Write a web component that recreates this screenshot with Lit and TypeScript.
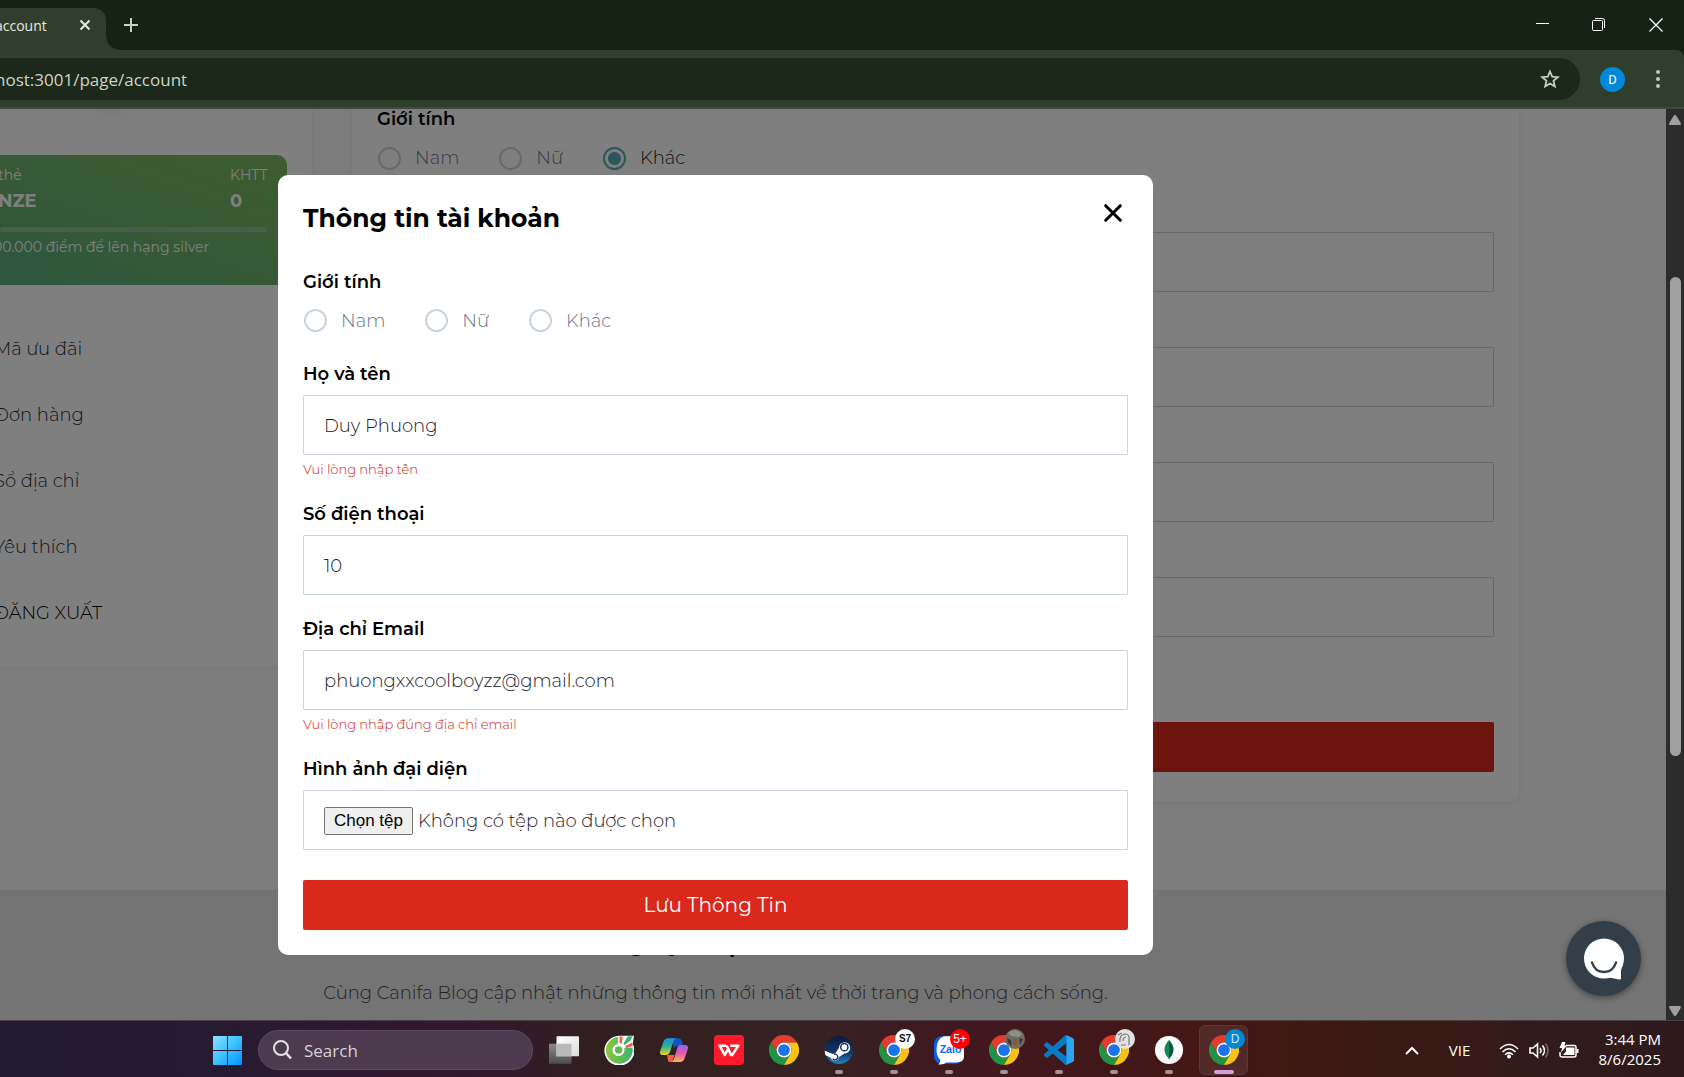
import { LitElement, html, svg, css, nothing } from "lit";
import { customElement } from "lit/decorators.js";

const chromeMark = svg`
  <path fill="#e33b2e" d="M24 12H44.8A24 24 0 0 0 3.2 12L13.6 30A12 12 0 0 1 24 12z"/>
  <path fill="#229342" d="M13.6 30L3.2 12A24 24 0 0 0 24 48L34.4 30A12 12 0 0 1 13.6 30z"/>
  <path fill="#fbc116" d="M34.4 30L24 48A24 24 0 0 0 44.8 12H24A12 12 0 0 1 34.4 30z"/>
  <circle cx="24" cy="24" r="12" fill="#fff"/>
  <circle cx="24" cy="24" r="9.4" fill="#1a73e8"/>`;

const appIcons: Record<string, unknown> = {
  taskview: svg`
    <defs>
      <linearGradient id="tv1" x1="0" y1="0" x2="1" y2="1"><stop offset="0" stop-color="#fff"/><stop offset="1" stop-color="#dcdcdc"/></linearGradient>
      <linearGradient id="tv2" x1="0" y1="0" x2="0" y2="1"><stop offset="0" stop-color="#8a8a8a"/><stop offset="1" stop-color="#4d4d4d"/></linearGradient>
    </defs>
    <rect x="0" y="14" width="36" height="32" rx="1" fill="url(#tv2)"/>
    <rect x="12" y="2" width="36" height="32" rx="1" fill="url(#tv1)"/>
    <rect x="12" y="14" width="24" height="20" fill="#b9b9b9"/>`,
  coccoc: svg`
    <defs><linearGradient id="cc" x1="0" y1="0" x2="1" y2="0"><stop offset="0" stop-color="#8cc63f"/><stop offset="1" stop-color="#3bb273"/></linearGradient></defs>
    <path fill="#fff" d="M24 1H48L46 14A24 24 0 1 1 24 1z"/>
    <path fill="url(#cc)" d="M23 3A21.500 21.500 0 1 0 45.500 20L32 21A9.500 9.500 0 1 1 22 14.600z"/>
    <circle cx="23.500" cy="24" r="9" fill="#fff"/>
    <circle cx="23.500" cy="24" r="6" fill="#5fbb4e"/>
    <path fill="#f15a3a" d="M25 2l5 1-2 11-3-1zM34 18l11-6 1 5-11 4z"/>
    <path fill="#3bb273" d="M31 14L38 2h8l-4 7-9 7z"/>`,
  copilot: svg`
    <defs>
      <linearGradient id="cp1" x1="0" y1="0" x2="0" y2="1"><stop offset="0" stop-color="#1b8fe0"/><stop offset=".5" stop-color="#2fb28c"/><stop offset="1" stop-color="#f2d31b"/></linearGradient>
      <linearGradient id="cp2" x1="0" y1="0" x2="0" y2="1"><stop offset="0" stop-color="#9a62e8"/><stop offset=".5" stop-color="#e55aa9"/><stop offset="1" stop-color="#ffae5c"/></linearGradient>
    </defs>
    <path fill="#1355c4" d="M20 5h11q4 0 5.500 5l2 7H30q-5 0-6 5z"/>
    <path fill="url(#cp1)" d="M14 5h14q-4 1-5 5l-5 16q-2 6-7 6H6q-6 0-4-7l5-14q2-6 7-6z"/>
    <path fill="#f0603e" d="M13 32h12l-4 11H17q-3 0-3-4z"/>
    <path fill="url(#cp2)" d="M33 16h8q7 0 5 7l-5 14q-2 6-7 6H19q4-1 5-5l5-16q1-6 4-6z"/>`,
  wps: svg`
    <rect width="48" height="48" rx="6" fill="#ff1a2b"/>
    <path fill="none" stroke="#fff" stroke-width="4" stroke-linejoin="round" d="M7 17h11l-3 0M9 17l8 15 6-10 4 10h2l10-15H26M20 17l4 7"/>`,
  chrome: chromeMark,
  steam: svg`
    <defs><linearGradient id="st" x1="0" y1="0" x2="0" y2="1"><stop offset="0" stop-color="#0d1a3c"/><stop offset=".6" stop-color="#10386b"/><stop offset="1" stop-color="#1c86c4"/></linearGradient></defs>
    <circle cx="24" cy="24" r="22.500" fill="url(#st)"/>
    <path fill="#fff" d="M1 25l13 5.500q2-1 4-1l6-9a9 9 0 1 1 8.500 9L24 35a7 7 0 0 1-13.500 1.500L2 32z"/>
    <circle cx="32.500" cy="19.500" r="5.800" fill="#fff" stroke="#16335f" stroke-width="2.400"/>
    <path fill="none" stroke="#16335f" stroke-width="2" d="M14 38a4.500 4.500 0 1 0 2-7"/>`,
  zalo: svg`
    <rect x="0" y="2" width="46" height="44" rx="12" fill="#0a5ff0"/>
    <path fill="#fff" d="M16 2h20q12 0 12 12v20q0 10-12 10H20q-5 4-13 3 4-3 3-7-6-6-6-16Q4 6 16 2z"/>
    <text x="9" y="29" font-family="Liberation Sans, sans-serif" font-weight="700" font-size="17" fill="#0a68ff">Zalo</text>`,
  vscode: svg`
    <g transform="scale(2)">
      <path fill="#0a7ac4" d="M23.150 2.587L18.210.210a1.494 1.494 0 0 0-1.705.290l-9.460 8.630-4.120-3.128a1 1 0 0 0-1.276.057L.327 7.261A1 1 0 0 0 .326 8.740L3.899 12 .326 15.260a1 1 0 0 0 .001 1.479L1.650 17.940a1 1 0 0 0 1.276.057l4.120-3.128 9.460 8.630a1.492 1.492 0 0 0 1.704.290l4.942-2.377A1.500 1.500 0 0 0 24 20.060V3.939a1.500 1.500 0 0 0-.850-1.352zm-5.146 14.861L10.826 12l7.178-5.448v10.896z"/>
      <path fill="#2aa5f0" d="M18 .150l5.150 2.437A1.500 1.500 0 0 1 24 3.939V20.060a1.500 1.500 0 0 1-.850 1.352L18 23.850z"/>
    </g>`,
  mongo: svg`
    <circle cx="24" cy="24" r="22.500" fill="#fafafa"/>
    <path fill="#0f8a5a" d="M24 8q-14 15-1 29l1 3z"/>
    <path fill="#01583f" d="M24 8q14 15 1 29l-1 3z"/>`,
};

interface TaskApp { name: string; icon: string; badge?: string; kind?: string; running?: boolean; active?: boolean }

const apps: TaskApp[] = [
  { name: "Task view", icon: "taskview" },
  { name: "Cốc Cốc", icon: "coccoc" },
  { name: "Copilot", icon: "copilot" },
  { name: "WPS Office", icon: "wps" },
  { name: "Chrome", icon: "chrome" },
  { name: "Steam", icon: "steam", running: true },
  { name: "Chrome", icon: "chrome", badge: "S7", kind: "ink", running: true },
  { name: "Zalo", icon: "zalo", badge: "5+", kind: "alert", running: true },
  { name: "Chrome", icon: "chrome", kind: "photo", running: true },
  { name: "VS Code", icon: "vscode", running: true },
  { name: "Chrome", icon: "chrome", kind: "sketch", running: true },
  { name: "MongoDB Compass", icon: "mongo", running: true },
  { name: "Chrome", icon: "chrome", badge: "D", kind: "blue", running: true, active: true },
];

const badgeArt: Record<string, unknown> = {
  photo: html`<svg width="20" height="20" viewBox="0 0 20 20"><circle cx="10" cy="10" r="10" fill="#6d6d64"/><path fill="#8f9086" d="M3 4q7-6 14 1l-3 3-8-1z"/><path fill="#3d3a35" d="M2 9l4 2 1 6-4-3zM14 9l4 1-3 6z"/><path fill="#8a5540" d="M8 10h4v5l-2 2-2-2z"/></svg>`,
  sketch: html`<svg width="20" height="20" viewBox="0 0 20 20" fill="none"><circle cx="10" cy="10" r="10" fill="#e2e2e2"/><path stroke="#777" stroke-width="1.200" d="M5 13q-1-7 5-8 5 0 4 6v5M8 12q0-4 3-4M3 6l4-2M6 16h5"/></svg>`,
};

@customElement("browser-bar")
class BrowserBar extends LitElement {
  static styles = css`
    :host { display: block; font-family: "Open Sans", "Noto Sans", sans-serif; color: #e4eade; background: #152314; }
    button { border: 0; padding: 0; background: none; color: inherit; display: grid; place-items: center; }
    .strip { display: flex; align-items: flex-end; height: 50px; }
    .tab { display: flex; align-items: center; justify-content: space-between; width: 106px; height: 42px; box-sizing: border-box; padding-right: 12px; border-radius: 0 12px 0 0; background: #303e2d; overflow: hidden; font-size: 14px; }
    .tab-title { margin-left: -5px; white-space: nowrap; line-height: 20px; padding-bottom: 6px; }
    .tab-close { width: 18px; height: 18px; margin-bottom: 8px; }
    .flare { width: 13px; height: 13px; background: radial-gradient(circle at 100% 0, transparent 12px, #303e2d 13px); }
    .new-tab { width: 24px; height: 50px; }
    .controls { display: flex; margin-left: auto; height: 50px; }
    .controls button { width: 57px; height: 50px; }
    .tools { display: flex; align-items: center; gap: 20px; padding: 8px 13px 7px 0; background: #303e2d; border-bottom: 2px solid #3f4b3c; border-top-right-radius: 8px; }
    .address { flex: 1; display: flex; align-items: center; height: 42px; padding-right: 16px; border-radius: 0 21px 21px 0; background: #1b281a; overflow: hidden; }
    .url { flex: 1; min-width: 0; margin-left: -5px; padding: 2px 0 0; border: 0; background: none; color: #cdd4c6; font: 17px/24px "Open Sans", "Noto Sans", sans-serif; outline: 0; }
    .star { width: 28px; height: 28px; }
    .avatar { width: 25px; height: 25px; border-radius: 50%; background: #0288d8; color: #fff; font: 13px/25px Roboto, sans-serif; }
    .more { width: 26px; height: 28px; }
  `;
  render() {
    return html`
      <div class="strip">
        <div class="tab">
          <span class="tab-title">account</span>
          <button class="tab-close" aria-label="Close tab"><svg width="12" height="12" viewBox="0 0 12 12" stroke="#e4eade" stroke-width="2"><path d="M1.500 1.500l9 9M10.500 1.500l-9 9"/></svg></button>
        </div>
        <div class="flare"></div>
        <button class="new-tab" aria-label="New tab"><svg width="14" height="14" viewBox="0 0 14 14" stroke="#c5d3bb" stroke-width="2"><path d="M7 0v14M0 7h14"/></svg></button>
        <div class="controls">
          <button aria-label="Minimize"><svg width="14" height="14" viewBox="0 0 14 14"><path d="M1 5.500h13" stroke="#fff"/></svg></button>
          <button aria-label="Restore"><svg width="14" height="14" viewBox="0 0 14 14" fill="none" stroke="#fff"><rect x=".5" y="2.500" width="10" height="10" rx="1"/><path d="M3 .5h7.500q2 0 2 2V10"/></svg></button>
          <button aria-label="Close"><svg width="14" height="14" viewBox="0 0 14 14" stroke="#fff" stroke-width="1.300"><path d="M.5.5l13 13M13.500.5l-13 13"/></svg></button>
        </div>
      </div>
      <div class="tools">
        <div class="address">
          <input class="url" aria-label="Address" .value=${"host:3001/page/account"} />
          <button class="star" aria-label="Bookmark"><svg width="20" height="20" viewBox="0 0 20 20" fill="none" stroke="#c9cfc4" stroke-width="1.800"><path d="M10 2.500l2.200 5.200 5.600.500-4.300 3.700 1.300 5.500L10 14.500l-4.800 2.900 1.300-5.500L2.200 8.200l5.600-.500z"/></svg></button>
        </div>
        <button class="avatar" aria-label="Profile">D</button>
        <button class="more" aria-label="Menu"><svg width="4" height="20" viewBox="0 0 4 20" fill="#b9cdb0"><circle cx="2" cy="3" r="2"/><circle cx="2" cy="10" r="2"/><circle cx="2" cy="17" r="2"/></svg></button>
      </div>`;
  }
}

const formStyles = css`
  :host { display: block; }
  .field { display: flex; flex-direction: column; padding-top: 21px; }
  .field.first { padding-top: 0; }
  .label { padding: 0; margin-bottom: 8px; font-size: 18px; line-height: 26px; font-weight: 600; color: #000; }
  .first .label { padding-top: 1px; margin-bottom: 7px; }
  .choices { display: flex; gap: 39px; margin: 7px 0; height: 24px; }
  .choice { display: flex; align-items: center; gap: 14px; font-size: 18px; line-height: 24px; font-weight: 300; color: #64748b; }
  .choice.on { color: #1a202c; }
  .radio { appearance: none; box-sizing: border-box; width: 23px; height: 23px; margin: 0 0 0 1px; border: 2px solid #cbd5e0; border-radius: 50%; background: transparent; }
  .radio:checked { border-color: #56acb8; background: radial-gradient(circle, #56acb8 6px, transparent 7px); }
  fieldset { margin: 0; border: 0; padding: 0; min-width: 0; }
  .box { box-sizing: border-box; width: 100%; height: 60px; padding: 2px 20px 0; border: 1px solid #cbd5e0; border-radius: 1px; background: transparent; color: #1a202c; font-family: inherit; font-size: 18px; font-weight: 300; outline: 0; }
  .error { padding-top: 4px; font-size: 13px; line-height: 21px; font-weight: 300; color: #d01c10; }
  .submit { width: 100%; height: 50px; padding: 0; border: 0; border-radius: 2px; background: #da291c; color: #fff; font-family: inherit; font-size: 20px; font-weight: 400; }
`;

const genders = ["Nam", "Nữ", "Khác"];

const genderField = (group: string, selected: string) => html`
  <fieldset class="field first">
    <legend class="label">Giới tính</legend>
    <div class="choices">
      ${genders.map((g) => html`
        <label class="choice ${g === selected ? "on" : ""}">
          <input class="radio" type="radio" name=${group} .checked=${g === selected} />${g}
        </label>`)}
    </div>
  </fieldset>`;

const textField = (id: string, label: string, value = "", type = "text", error = "") => html`
  <div class="field">
    <label class="label" for=${id}>${label}</label>
    <input class="box" id=${id} type=${type} .value=${value} />
    ${error ? html`<div class="error">${error}</div>` : nothing}
  </div>`;

@customElement("account-page")
class AccountPage extends LitElement {
  static styles = [formStyles, css`
    :host { display: block; height: 100%; overflow: hidden; background: #fafafa; }
    .columns { display: grid; grid-template-columns: 312px minmax(0, 1167px); gap: 40px; align-items: start; height: 781px; }
    .side, .main { background: #fff; box-shadow: 0 1px 4px rgba(0, 0, 0, 0.06); }
    .side { height: 558px; border-radius: 0 0 10px 0; }
    .crest { width: 60px; height: 16px; margin-left: 81px; background: radial-gradient(ellipse at 50% 0, #f6f6f6, #fff 70%); }
    .card { box-sizing: border-box; width: 287px; height: 130px; margin-top: 30px; padding: 10px 20px 0 0; border-radius: 0 10px 10px 0; color: #fff; overflow: hidden; background: linear-gradient(200deg, #7ab85e 0%, #70b46a 45%, #5aae7e 100%); }
    .card-row { display: flex; justify-content: space-between; margin-left: -2px; font-size: 14px; line-height: 20px; }
    .card-row.big { font-size: 18px; line-height: 32px; font-weight: 700; }
    .col { width: 37px; }
    .bar { height: 5px; margin-top: 10px; border-radius: 3px; background: #90c096; }
    .card-note { margin: 4px 0 0 -7px; font-size: 14px; line-height: 22px; white-space: nowrap; }
    .menu { display: grid; gap: 40px; margin: 51px 0 0 -6px; padding: 0; list-style: none; font-size: 18px; line-height: 26px; font-weight: 300; }
    .menu a { color: #1f2733; text-decoration: none; }
    .menu .exit { color: #000; }
    .main { box-sizing: border-box; margin-top: -4px; padding: 0 25px 30px; border-radius: 0 0 10px 10px; }
    .submit { margin-top: 85px; }
    .news { display: grid; justify-items: center; align-content: start; gap: 21px; box-sizing: border-box; height: 140px; padding: 37px 235px 0 0; background: #e8e8e8; }
    .news h2 { margin: 0; font-size: 25px; line-height: 30px; font-weight: 700; color: #000; }
    .news p { margin: 0; font-size: 18px; line-height: 30px; font-weight: 300; color: #444; }
  `];
  render() {
    return html`
      <div class="columns">
        <aside class="side">
          <div class="crest"></div>
          <section class="card">
            <div class="card-row"><span>thẻ</span><span class="col">KHTT</span></div>
            <div class="card-row big"><span>NZE</span><span class="col">0</span></div>
            <div class="bar"></div>
            <div class="card-note">00.000 điểm để lên hạng silver</div>
          </section>
          <ul class="menu">
            <li><a href="#voucher">Mã ưu đãi</a></li>
            <li><a href="#orders">Đơn hàng</a></li>
            <li><a href="#address">Sổ địa chỉ</a></li>
            <li><a href="#wishlist">Yêu thích</a></li>
            <li><a class="exit" href="#logout">ĐĂNG XUẤT</a></li>
          </ul>
        </aside>
        <main class="main">
          ${genderField("page-gender", "Khác")}
          ${textField("page-name", "Họ và tên")}
          ${textField("page-phone", "Số điện thoại", "", "tel")}
          ${textField("page-email", "Địa chỉ Email", "", "email")}
          ${textField("page-birth", "Ngày sinh")}
          <button class="submit">Cập nhật</button>
        </main>
      </div>
      <section class="news">
        <h2>Đăng ký nhận bản tin</h2>
        <p>Cùng Canifa Blog cập nhật những thông tin mới nhất về thời trang và phong cách sống.</p>
      </section>`;
  }
}

@customElement("account-dialog")
class AccountDialog extends LitElement {
  static styles = [formStyles, css`
    :host { display: block; box-sizing: border-box; width: 875px; max-width: 100%; padding: 25px; border-radius: 10px; background: #fff; }
    .head { display: flex; justify-content: space-between; align-items: flex-start; margin-bottom: 32px; }
    .head h1 { margin: 0; font-size: 25px; line-height: 36px; font-weight: 700; color: #000; }
    .close { width: 30px; height: 26px; padding: 0; border: 0; background: none; display: grid; place-items: center; }
    .file { position: relative; display: flex; align-items: center; gap: 5px; }
    .file input { position: absolute; inset: 0; opacity: 0; }
    .pick { box-sizing: border-box; height: 28px; padding: 0 9px; border: 1px solid #767676; border-radius: 2px; background: #efefef; color: #000; font: 400 17px/26px "Liberation Sans", Arial, sans-serif; }
    .submit { margin-top: 30px; }
  `];
  render() {
    return html`
      <header class="head">
        <h1>Thông tin tài khoản</h1>
        <button class="close" aria-label="Đóng"><svg width="18" height="18" viewBox="0 0 18 18" stroke="#000" stroke-width="3" stroke-linecap="round"><path d="M1.700 1.700l14.600 14.600M16.300 1.700L1.700 16.300"/></svg></button>
      </header>
      ${genderField("dialog-gender", "")}
      ${textField("name", "Họ và tên", "Duy Phuong", "text", "Vui lòng nhập tên")}
      ${textField("phone", "Số điện thoại", "10", "tel")}
      ${textField("email", "Địa chỉ Email", "phuongxxcoolboyzz@gmail.com", "email", "Vui lòng nhập đúng địa chỉ email")}
      <div class="field">
        <label class="label" for="avatar">Hình ảnh đại diện</label>
        <div class="box file">
          <span class="pick">Chọn tệp</span><span>Không có tệp nào được chọn</span>
          <input id="avatar" type="file" />
        </div>
      </div>
      <button class="submit">Lưu Thông Tin</button>`;
  }
}

@customElement("task-bar")
class TaskBar extends LitElement {
  static styles = css`
    :host { display: flex; align-items: center; box-sizing: border-box; height: 57px; padding: 2px 23px 0 200px; border-top: 1px solid #4d4044; color: #fff; font-family: "Open Sans", "Noto Sans", sans-serif;
      background: linear-gradient(90deg, #231b30 0%, #261b31 12%, #32182e 28%, #31201f 36%, #352222 48%, #42171f 58%, #431714 72%, #3a1a14 84%, #311b1c 92%, #2d1a1d 100%); }
    button { padding: 0; border: 0; background: none; color: inherit; }
    .start { display: grid; place-items: center; width: 55px; height: 54px; }
    .search { display: flex; align-items: center; gap: 12px; box-sizing: border-box; width: 275px; height: 40px; margin: 0 3px; padding: 0 14px; border: 1px solid #5e4b60; border-radius: 20px; background: #4c3a4f; }
    .search input { flex: 1; min-width: 0; padding: 2px 0 0; border: 0; background: none; outline: 0; font: 17px/24px "Open Sans", "Noto Sans", sans-serif; color: #fff; }
    .search input::placeholder { color: #d8d0d8; opacity: 1; }
    .app { position: relative; display: grid; place-items: center; width: 55px; height: 54px; }
    .app.active::before { content: ""; position: absolute; inset: 2px 3px; border: 1px solid #593a35; border-radius: 6px; background: rgba(255, 255, 255, 0.08); }
    .app svg { position: relative; }
    .dot { position: absolute; bottom: 3px; left: 50%; width: 8px; height: 4px; margin-left: -4px; border-radius: 2px; background: #a39296; }
    .active .dot { width: 20px; margin-left: -10px; background: #d99be0; }
    .badge { position: absolute; top: 6px; left: 29px; width: 20px; height: 20px; border-radius: 50%; font-size: 12px; line-height: 20px; text-align: center; }
    .badge svg { display: block; }
    .alert { background: #f00; color: #fff; }
    .blue { background: #0288d1; color: #cfeaff; }
    .ink { background: #fff; color: #111; font-weight: 800; font-size: 10px; }
    .tray { display: flex; align-items: center; margin-left: auto; }
    .tray button { display: grid; place-items: center; height: 48px; }
    .more { width: 40px; }
    .lang { width: 56px; font: 15px/20px "Open Sans", "Noto Sans", sans-serif; }
    .tray .status { grid-auto-flow: column; gap: 10px; padding: 0 20px 0 11px; }
    .clock { padding-bottom: 2px; font-size: 15px; line-height: 20px; text-align: right; }
  `;
  render() {
    return html`
      <button class="start" aria-label="Start"><svg width="29" height="29" viewBox="0 0 29 29">
        <defs><linearGradient id="win" x1="0" y1="0" x2="1" y2="1"><stop offset="0" stop-color="#8be0ff"/><stop offset=".5" stop-color="#3cc2ff"/><stop offset="1" stop-color="#0091ff"/></linearGradient></defs>
        <path fill="url(#win)" d="M1 0h13v14H0V1q0-1 1-1zM15 0h13q1 0 1 1v13H15zM0 15h14v14H1q-1 0-1-1zM15 15h14v13q0 1-1 1H15z"/></svg></button>
      <label class="search"><svg width="19" height="20" viewBox="0 0 19 20" fill="none" stroke="#e6e0e6" stroke-width="2"><circle cx="8" cy="8" r="7"/><path stroke-width="2.600" d="M13 13l5 5.500"/></svg><input aria-label="Search" placeholder="Search" /></label>
      ${apps.map((a) => html`
        <button class="app ${a.active ? "active" : ""}" aria-label=${a.name}>
          <svg width="30" height="30" viewBox="0 0 48 48">${appIcons[a.icon]}</svg>
          ${a.kind ? html`<span class="badge ${a.kind}">${a.badge ?? badgeArt[a.kind]}</span>` : nothing}
          ${a.running ? html`<span class="dot"></span>` : nothing}
        </button>`)}
      <div class="tray">
        <button class="more" aria-label="Hidden icons"><svg width="14" height="9" viewBox="0 0 14 9" fill="none" stroke="#fff" stroke-width="2"><path d="M1 8l6-6 6 6"/></svg></button>
        <button class="lang">VIE</button>
        <button class="status" aria-label="Network, volume, battery">
          <svg width="20" height="17" viewBox="0 0 20 17" fill="none" stroke="#fff" stroke-width="1.600"><path d="M1 7q9-9 18 0M3.500 10q6.500-6.500 13 0M6 12.800q4-4 8 0"/><circle cx="10" cy="14.500" r="1.200" fill="#fff"/></svg>
          <svg width="20" height="17" viewBox="0 0 20 17" fill="none" stroke="#fff" stroke-width="1.600"><path d="M1 6h3l4.500-4v13L4 11H1zM11 6q2 2.500 0 5M13.500 3.500q4 5 0 10"/><path stroke="#7a6362" d="M16.500 1.500q5 7 0 14"/></svg>
          <svg width="20" height="17" viewBox="0 0 20 17"><path fill="none" stroke="#fff" stroke-width="1.500" d="M7 3.500h8.500q1.500 0 1.500 1.500v8q0 2-2 2H3.500Q1 15 1 13v-3"/><path fill="#fff" d="M7 5.500h8.500v7.500H4l3-3.500zM17.500 7h2v4h-2zM3 0l3.500 0-1 3.500H8L2 10.500 3.200 6H.500z"/></svg>
        </button>
        <div class="clock">3:44 PM<br />8/6/2025</div>
      </div>`;
  }
}

@customElement("app-root")
class AppRoot extends LitElement {
  static styles = css`
    :host { display: flex; flex-direction: column; height: 100vh; overflow: hidden; font-family: Montserrat, Inter, "Noto Sans", sans-serif; }
    .view { flex: 1; min-height: 0; display: flex; }
    .stage { position: relative; flex: 1; min-width: 0; }
    .overlay { position: absolute; inset: 0; display: grid; place-items: center; padding-right: 235px; background: rgba(0, 0, 0, 0.5); }
    .chat { position: absolute; right: 25px; bottom: 24px; width: 75px; height: 75px; padding: 0; border: 0; border-radius: 50%; background: #333f48; display: grid; place-items: center; box-shadow: 0 2px 6px rgba(0, 0, 0, 0.4); }
    .scroll { display: flex; flex-direction: column; align-items: center; box-sizing: border-box; width: 18px; padding: 6px 0 4px; background: #2c2c2c; }
    .thumb { width: 11px; height: 479px; margin-top: 152px; border-radius: 6px; background: #9f9f9f; }
    .down { margin-top: auto; }
  `;
  render() {
    return html`
      <browser-bar></browser-bar>
      <div class="view">
        <div class="stage">
          <account-page></account-page>
          <div class="overlay"><account-dialog role="dialog" aria-label="Thông tin tài khoản"></account-dialog></div>
          <button class="chat" aria-label="Chat"><svg width="42" height="42" viewBox="0 0 42 42"><circle cx="21" cy="20.500" r="20" fill="#fff"/><path fill="#fff" d="M40 26q-2 3-2 7v7q0 2-2 1.500L24 39z"/><path fill="none" stroke="#333f48" stroke-width="2.400" stroke-linecap="round" d="M9 24.500q3 9.500 12 9.500t12-9.500"/></svg></button>
        </div>
        <div class="scroll">
          <svg width="12" height="10" viewBox="0 0 12 10"><path fill="#9f9f9f" d="M6 0q1 0 1.500 1L12 8.500q0 1.500-1 1.500H1Q0 10 0 8.500L4.500 1Q5 0 6 0z"/></svg>
          <div class="thumb"></div>
          <svg class="down" width="12" height="10" viewBox="0 0 12 10"><path fill="#9f9f9f" d="M6 10q1 0 1.500-1L12 1.500Q12 0 11 0H1Q0 0 0 1.500L4.500 9Q5 10 6 10z"/></svg>
        </div>
      </div>
      <task-bar></task-bar>`;
  }
}
